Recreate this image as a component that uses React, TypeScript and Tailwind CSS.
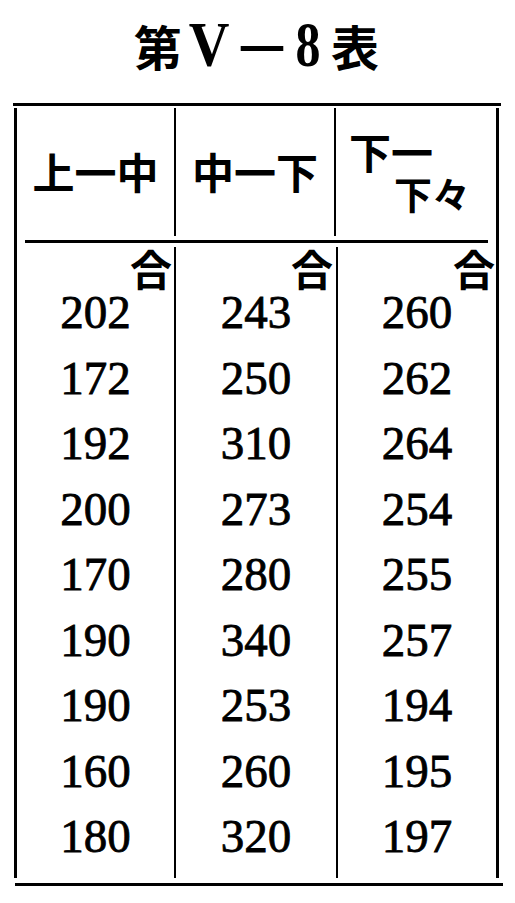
const rows = [
  ['202', '243', '260'],
  ['172', '250', '262'],
  ['192', '310', '264'],
  ['200', '273', '254'],
  ['170', '280', '255'],
  ['190', '340', '257'],
  ['190', '253', '194'],
  ['160', '260', '195'],
  ['180', '320', '197'],
];

const cjk = "font-['Noto_Sans_CJK_JP',sans-serif]";

function UnitCell({ pad, values, divider }: { pad: string; values: string[]; divider: boolean }) {
  return (
    <div className={`flex flex-col pb-[8px] ${divider ? 'border-r-2 border-black' : ''}`}>
      <div className={`h-[33px] text-right text-[42px] leading-[42px] font-bold ${cjk} ${pad}`}>合</div>
      {values.map((v, i) => (
        <div
          key={i}
          className="text-center text-[47px] leading-[65.5px] font-['Liberation_Serif',serif] [-webkit-text-stroke:0.8px_black]"
        >
          {v}
        </div>
      ))}
    </div>
  );
}

export default function App() {
  const col = (i: number) => rows.map((r) => r[i]);

  return (
    <div className="w-[515px] h-[903px] bg-white text-black overflow-hidden">
      {/* title */}
      <div className="h-[103px] flex justify-center items-start pt-[15px]">
        <div className="flex items-center h-[60px] mr-[2px]">
          <span className={`text-[48px] leading-none font-bold ${cjk}`}>第</span>
          <span className="inline-block ml-[4px] text-[64px] leading-none font-bold scale-x-[0.88] font-['Liberation_Serif',serif]">V</span>
          <span className={`inline-block ml-[6px] text-[48px] leading-none font-bold scale-x-[1.25] ${cjk}`}>－</span>
          <span className="inline-block ml-[6px] text-[64px] leading-none font-bold scale-x-[0.78] font-['Liberation_Serif',serif]">8</span>
          <span className={`ml-[7px] text-[48px] leading-none font-bold ${cjk}`}>表</span>
        </div>
      </div>

      {/* top rule */}
      <div className="ml-[13px] w-[488px] h-[3px] bg-black" />

      <div className="ml-[14px] w-[485px] mt-[2px] border-x-[3px] border-black">
        {/* header */}
        <div className={`grid grid-cols-[159px_160px_160px] h-[128px] ${cjk} font-bold`}>
          <div className="border-r-2 border-black flex items-center justify-center text-[42px] leading-none pb-[2px]">
            上一中
          </div>
          <div className="border-r-2 border-black flex items-center justify-center text-[42px] leading-none pb-[2px]">
            中一下
          </div>
          <div className="flex flex-col pt-[22px]">
            <div className="pl-[13px] text-[42px] leading-[42px]">下一</div>
            <div className="mt-[2px] pl-[58px] text-[38px] leading-[38px]">下々</div>
          </div>
        </div>

        <div className="mx-[8px] mt-[4px] h-[3px] bg-black" />

        {/* body */}
        <div className="grid grid-cols-[159px_162px_158px] mt-[4px]">
          <UnitCell pad="pr-[2px]" values={col(0)} divider />
          <UnitCell pad="pr-[3px]" values={col(1)} divider />
          <UnitCell pad="pr-[1px]" values={col(2)} divider={false} />
        </div>
      </div>

      {/* bottom rule */}
      <div className="ml-[15px] mt-[5px] w-[488px] h-[3px] bg-black" />
    </div>
  );
}
